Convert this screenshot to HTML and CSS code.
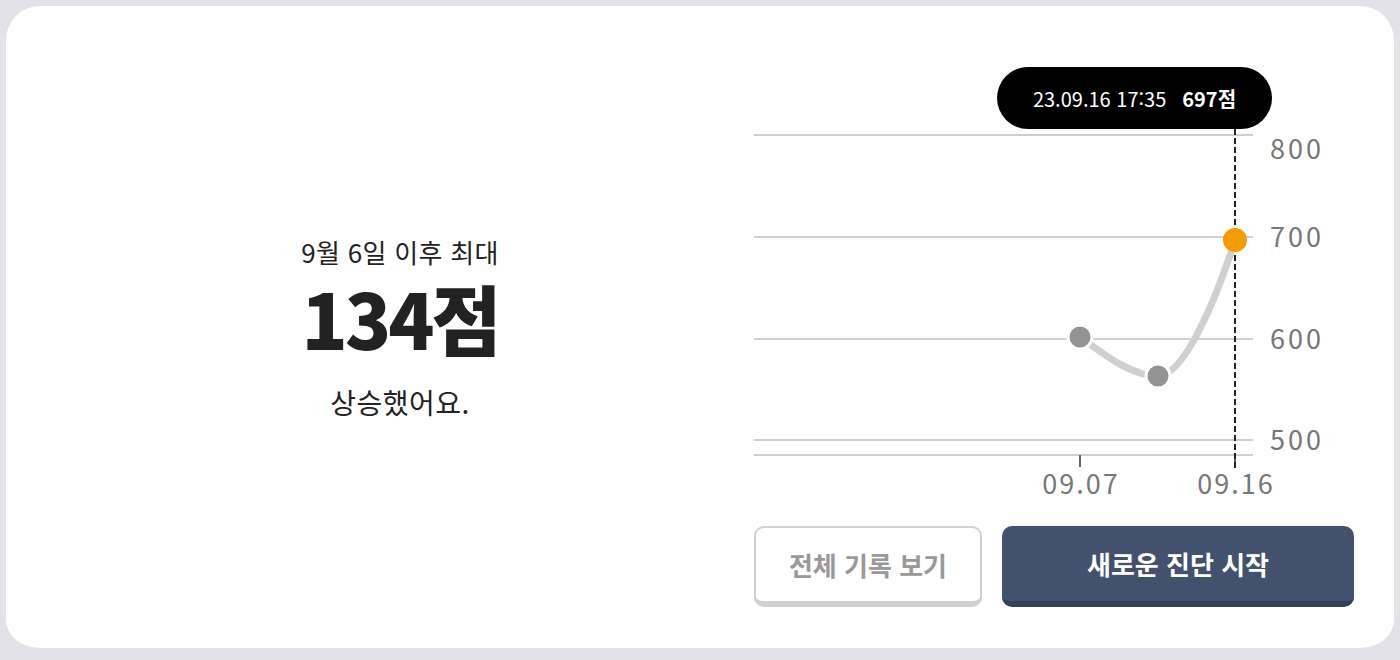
FILE: index.html
```html
<!DOCTYPE html>
<html lang="ko">
<head>
    <meta charset="UTF-8">
    <meta name="viewport" content="width=device-width, initial-scale=1.0">
    <title>점수 변화</title>
    <link rel="stylesheet" href="styles.css">
</head>
<body>
    <main class="card">
        <section class="summary">
            <p class="summary-since">9월 6일 이후 최대</p>
            <h1 class="summary-score">134점</h1>
            <p class="summary-text">상승했어요.</p>
        </section>

        <section class="history">
            <div class="chart">
                <svg class="chart-svg" viewBox="0 0 600 440" width="600" height="440">
                    <!-- 기준선 -->
                    <g class="grid">
                        <line x1="0" y1="75" x2="499" y2="75"></line>
                        <line x1="0" y1="177" x2="499" y2="177"></line>
                        <line x1="0" y1="279" x2="499" y2="279"></line>
                        <line x1="0" y1="380" x2="499" y2="380"></line>
                        <line x1="0" y1="395" x2="499" y2="395"></line>
                    </g>
                    <g class="y-labels">
                        <text x="516" y="99">800</text>
                        <text x="516" y="187">700</text>
                        <text x="516" y="289">600</text>
                        <text x="516" y="390">500</text>
                    </g>
                    <g class="ticks">
                        <line x1="326" y1="395" x2="326" y2="407"></line>
                        <line x1="481" y1="395" x2="481" y2="407"></line>
                    </g>
                    <g class="x-labels">
                        <text x="327" y="434">09.07</text>
                        <text x="482" y="434">09.16</text>
                    </g>
                    <line class="cursor" x1="481" y1="69" x2="481" y2="410"></line>
                    <path class="curve" d="M326,277 C352,296 378,316 404,316 C430,316 462,240 481,180"></path>
                    <circle class="point" cx="326" cy="277" r="12"></circle>
                    <circle class="point" cx="404" cy="316" r="12"></circle>
                    <circle class="point active" cx="481" cy="180" r="12"></circle>
                </svg>
                <div class="tooltip">
                    <span class="tooltip-date">23.09.16 17:35</span>
                    <strong class="tooltip-score">697점</strong>
                </div>
            </div>

            <div class="actions">
                <button class="button secondary">전체 기록 보기</button>
                <button class="button primary">새로운 진단 시작</button>
            </div>
        </section>
    </main>
</body>
</html>
```

FILE: styles.css
```css
* {
    box-sizing: border-box;
}

body {
    margin: 0;
    font-family: "Noto Sans CJK KR", "Noto Sans", sans-serif;
    color: #222;
    background-color: #e3e2e8;
}

.card {
    width: 1400px;
    height: 660px;
    display: flex;
    padding: 0 40px;
    background-color: #fff;
    border-style: solid;
    border-color: #e3e2e8;
    border-width: 6px 6px 12px;
    border-radius: 40px;
}

.summary {
    flex: 1;
    display: flex;
    flex-direction: column;
    align-items: center;
    justify-content: center;
    text-align: center;
}

.summary-since {
    margin: 0;
    font-size: 26px;
    line-height: 34px;
    letter-spacing: 0.3px;
}

.summary-score {
    margin: 3px 0 0;
    font-size: 76px;
    font-weight: 900;
    line-height: 90px;
    letter-spacing: -3px;
}

.summary-text {
    margin: 22px 0 0;
    font-size: 28px;
    line-height: 36px;
    letter-spacing: 0.5px;
}

.history {
    width: 600px;
    padding: 54px 0 41px;
    display: flex;
    flex-direction: column;
}

.chart {
    position: relative;
    height: 440px;
}

.chart-svg {
    display: block;
    overflow: visible;
}

.y-labels text,
.x-labels text {
    font-family: "Noto Sans CJK KR", "Noto Sans", sans-serif;
    font-size: 27px;
    letter-spacing: 3px;
    fill: #777;
}

.x-labels text {
    text-anchor: middle;
    letter-spacing: 2px;
}

.grid line {
    stroke: #cfcfcf;
    stroke-width: 2;
}

.ticks line {
    stroke: #666;
    stroke-width: 2;
}

.cursor {
    stroke: #222;
    stroke-width: 2;
    stroke-dasharray: 6 3;
}

.curve {
    fill: none;
    stroke: #d0d0d0;
    stroke-width: 7;
    stroke-linecap: round;
}

.point {
    fill: #939393;
    stroke: #fff;
    stroke-width: 3;
}

.point.active {
    fill: #f59c00;
    stroke: none;
}

.tooltip {
    position: absolute;
    left: 243px;
    top: 7px;
    width: 275px;
    height: 62px;
    display: flex;
    align-items: center;
    justify-content: center;
    gap: 16px;
    background-color: #000;
    color: #fff;
    border-radius: 31px;
    font-size: 20px;
}

.tooltip-score {
    font-weight: 700;
}

.actions {
    margin-top: 26px;
    display: flex;
    gap: 20px;
}

.button {
    height: 81px;
    border-radius: 10px;
    font-family: inherit;
    font-size: 26px;
    font-weight: 700;
    cursor: pointer;
}

.button.secondary {
    width: 228px;
    background-color: #fff;
    color: #999;
    border: 2px solid #d0d0d0;
    border-bottom-width: 6px;
}

.button.primary {
    flex: 1;
    background-color: #42516d;
    color: #fff;
    border: none;
    border-bottom: 6px solid #34405a;
}
```
